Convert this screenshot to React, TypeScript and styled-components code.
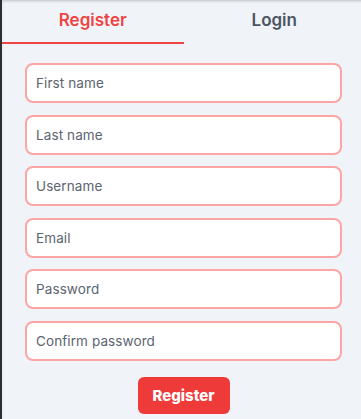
import React, { useState } from 'react';
import styled, { createGlobalStyle } from 'styled-components';

const GlobalStyle = createGlobalStyle`
  html, body {
    margin: 0;
    padding: 0;
    background: #f0f4f8;
    overflow: hidden;
  }
  * {
    box-sizing: border-box;
  }
`;

const Page = styled.div`
  width: 365px;
  min-height: 419px;
  border-left: 2px solid #2b3035;
  background: #f0f4f8;
  box-shadow: inset 0 2px 3px -1px rgba(0, 0, 0, 0.22);
  font-family: Inter, 'Noto Sans', sans-serif;
`;

const Tabs = styled.div`
  display: flex;
`;

const Tab = styled.button<{ $active?: boolean }>`
  flex: 1;
  height: 44px;
  padding: 0 0 2px;
  border: none;
  border-bottom: 2px solid ${(p) => (p.$active ? '#ef4444' : 'transparent')};
  background: transparent;
  font-family: inherit;
  font-size: 17px;
  font-weight: 600;
  color: ${(p) => (p.$active ? '#ef4444' : '#4b5563')};
  cursor: pointer;
`;

const Form = styled.form`
  display: flex;
  flex-direction: column;
  align-items: center;
  gap: 11.6px;
  padding: 19px 23px 0;
`;

const Field = styled.input`
  width: 100%;
  height: 40px;
  padding: 0 9px;
  border: 2px solid #fca5a5;
  border-radius: 8px;
  background: #fff;
  font-family: inherit;
  font-size: 13.5px;
  letter-spacing: 0.1px;
  color: #374151;
  outline: none;

  &::placeholder {
    color: #5b6470;
  }
`;

const SubmitButton = styled.button`
  margin-top: 4px;
  width: 92px;
  height: 37px;
  border: none;
  border-radius: 6px;
  background: #ef3a3a;
  color: #fff;
  font-family: inherit;
  font-size: 15px;
  font-weight: 800;
  cursor: pointer;
`;

const fields = [
  { name: 'firstName', label: 'First name', type: 'text' },
  { name: 'lastName', label: 'Last name', type: 'text' },
  { name: 'username', label: 'Username', type: 'text' },
  { name: 'email', label: 'Email', type: 'email' },
  { name: 'password', label: 'Password', type: 'password' },
  { name: 'confirm', label: 'Confirm password', type: 'password' },
];

export default function App() {
  const [tab, setTab] = useState<'register' | 'login'>('register');

  return (
    <>
      <GlobalStyle />
      <Page>
        <Tabs>
          <Tab $active={tab === 'register'} onClick={() => setTab('register')}>
            Register
          </Tab>
          <Tab $active={tab === 'login'} onClick={() => setTab('login')}>
            Login
          </Tab>
        </Tabs>
        <Form onSubmit={(e) => e.preventDefault()}>
          {fields.map((f) => (
            <Field key={f.name} name={f.name} type={f.type} placeholder={f.label} />
          ))}
          <SubmitButton type="submit">Register</SubmitButton>
        </Form>
      </Page>
    </>
  );
}
